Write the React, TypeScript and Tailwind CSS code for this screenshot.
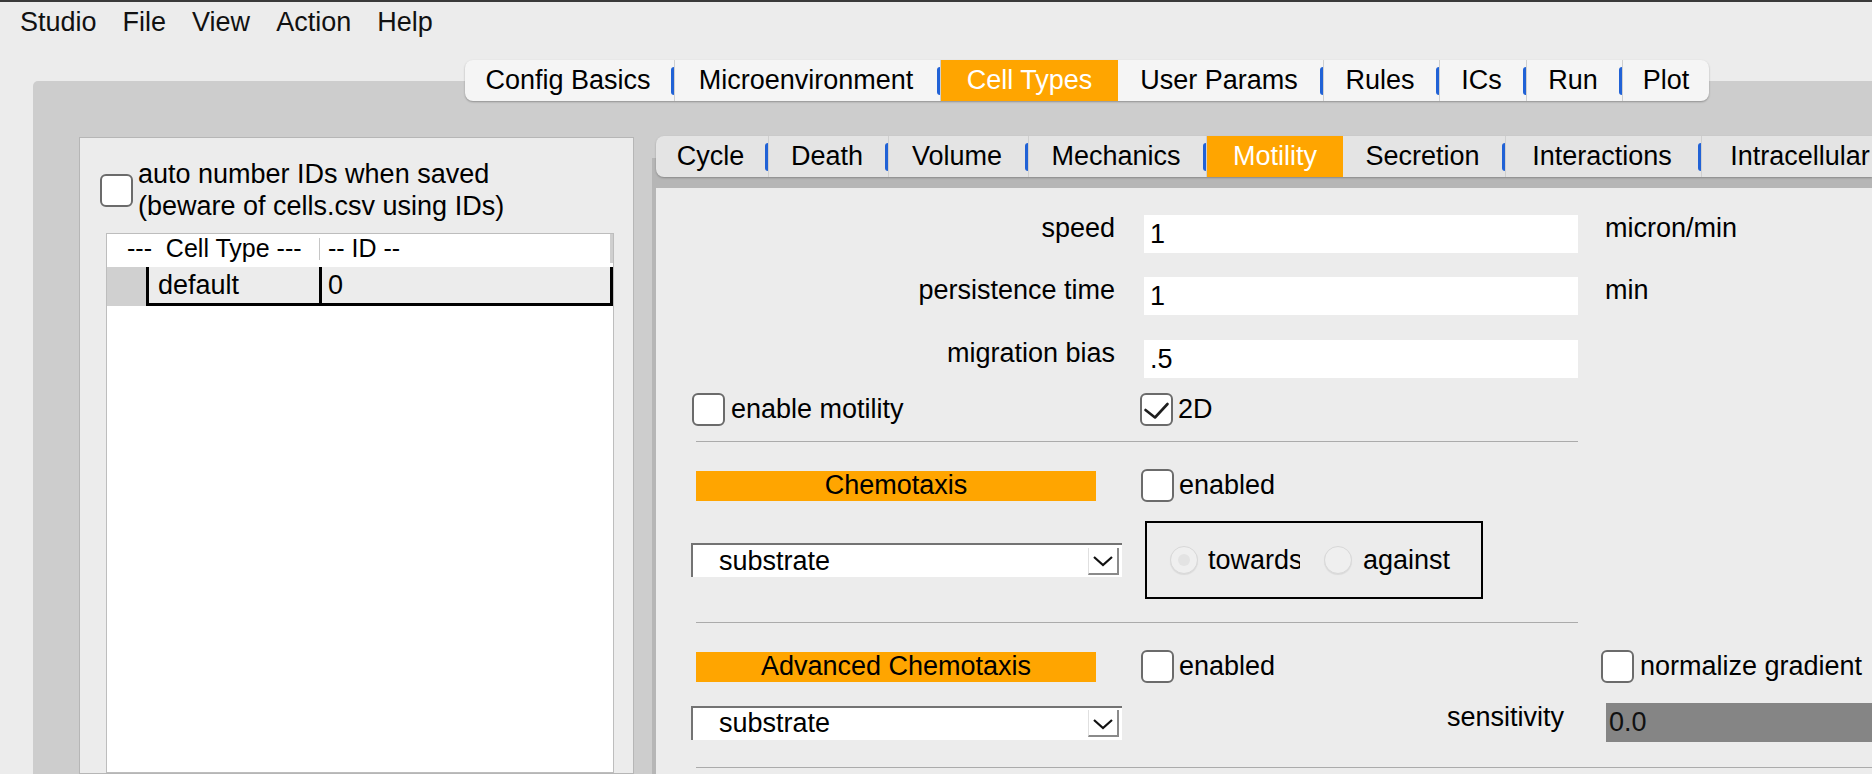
import React from "react";

const SANS = "font-['Liberation_Sans',Arial,sans-serif]";

type Tab = { label: string; width: string };

const mainTabs: Tab[] = [
  { label: "Config Basics", width: "w-[206px]" },
  { label: "Microenvironment", width: "w-[266px]" },
  { label: "Cell Types", width: "w-[181px]" },
  { label: "User Params", width: "w-[202px]" },
  { label: "Rules", width: "w-[116px]" },
  { label: "ICs", width: "w-[87px]" },
  { label: "Run", width: "w-[96px]" },
  { label: "Plot", width: "w-[90px]" },
];

const cellTabs: Tab[] = [
  { label: "Cycle", width: "w-[109px]" },
  { label: "Death", width: "w-[120px]" },
  { label: "Volume", width: "w-[140px]" },
  { label: "Mechanics", width: "w-[178px]" },
  { label: "Motility", width: "w-[140px]" },
  { label: "Secretion", width: "w-[159px]" },
  { label: "Interactions", width: "w-[196px]" },
  { label: "Intracellular", width: "w-[200px]" },
];

function Separator() {
  return (
    <span className="flex h-full w-[4px] shrink-0 items-center">
      <span className="h-[28px] w-[3px] rounded-l-full bg-[#2162d6]" />
      <span className="h-full w-px bg-[#cfcfcf]" />
    </span>
  );
}

function TabStrip({ tabs, active, className }: { tabs: Tab[]; active: string; className: string }) {
  return (
    <div className={`flex h-[41px] overflow-hidden text-[27px] ${className}`}>
      {tabs.map((t, i) => {
        const isActive = t.label === active;
        const showSep = i > 0 && tabs[i - 1].label !== active;
        return (
          <div key={t.label} className={`flex h-full shrink-0 ${t.width}`}>
            {showSep && <Separator />}
            <div
              className={`flex flex-1 items-center justify-center whitespace-nowrap ${
                isActive ? "bg-[#ffa500] text-white" : ""
              }`}
            >
              {t.label}
            </div>
          </div>
        );
      })}
    </div>
  );
}

function Checkbox({ checked }: { checked?: boolean }) {
  return (
    <span className="flex h-[33px] w-[33px] shrink-0 items-center justify-center rounded-[6px] border-2 border-[#6b6b6b] bg-white">
      {checked && (
        <svg viewBox="0 0 29 29" className="h-[29px] w-[29px]">
          <path
            d="M3.5 15 L13 22.5 L25.5 9"
            fill="none"
            stroke="#1e1e1e"
            strokeWidth="2.6"
            strokeLinecap="round"
            strokeLinejoin="round"
          />
        </svg>
      )}
    </span>
  );
}

function Radio({ dot }: { dot?: boolean }) {
  return (
    <span className="flex h-[28px] w-[28px] shrink-0 items-center justify-center rounded-full border border-[#d8d8d8] bg-[#efefef] shadow-[0_1px_1px_rgba(0,0,0,0.08)]">
      {dot && <span className="h-[12px] w-[12px] rounded-full bg-[#e3e3e3]" />}
    </span>
  );
}

function Combo() {
  return (
    <div className="flex h-[34px] w-[431px] shrink-0 items-center border-l-2 border-t-2 border-[#737373] bg-white">
      <span className="pl-[26px] text-[27px]">substrate</span>
      <span className="ml-auto mr-[3px] flex h-[27px] w-[31px] items-center justify-center border-b-2 border-l border-r-2 border-[#8a8a8a] border-l-[#e0e0e0]">
        <svg viewBox="0 0 28 24" className="h-[24px] w-[28px]">
          <path d="M5 9 L14 17 L23 9" fill="none" stroke="#111" strokeWidth="2.2" />
        </svg>
      </span>
    </div>
  );
}

function FieldRow({ label, value, unit, className }: { label: string; value: string; unit?: string; className: string }) {
  return (
    <div className={`flex h-[38px] items-start text-[27px] ${className}`}>
      <div className="w-[424px] shrink-0 text-right leading-[26px]">{label}</div>
      <div className="ml-[29px] flex h-[38px] w-[434px] shrink-0 items-center bg-white pl-[6px]">{value}</div>
      {unit && <div className="ml-[27px] leading-[26px]">{unit}</div>}
    </div>
  );
}

function OrangeBar({ title }: { title: string }) {
  return (
    <div className="ml-[5px] flex h-[30px] w-[400px] shrink-0 items-center justify-center bg-[#ffa500] text-[27px]">
      {title}
    </div>
  );
}

export default function App() {
  return (
    <div className={`h-[774px] w-[1872px] overflow-hidden bg-[#ececec] text-black ${SANS}`}>
      {/* menu bar */}
      <div className="h-[2px] bg-[#3a3a3a]" />
      <div className="flex h-[40px] items-center gap-[26px] pl-[20px] text-[27px] text-[#111]">
        <span>Studio</span>
        <span>File</span>
        <span>View</span>
        <span>Action</span>
        <span>Help</span>
      </div>

      {/* main tabs */}
      <TabStrip
        tabs={mainTabs}
        active="Cell Types"
        className="relative z-10 ml-[465px] mt-[18px] w-fit rounded-[8px] bg-[#f5f5f5] shadow-[0_1px_2px_rgba(0,0,0,0.3)]"
      />

      {/* outer panel */}
      <div className="-mt-[20px] ml-[33px] flex h-[693px] rounded-tl-[5px] bg-[#cdcdcd] pl-[46px] pt-[56px]">
        {/* left panel: cell type list */}
        <div className="flex w-[555px] shrink-0 flex-col border border-[#b6b6b6] bg-[#ececec]">
          <div className="flex items-center pl-[20px] pt-[20px]">
            <Checkbox />
            <div className="ml-[5px] text-[27px] leading-[32px]">
              <div>auto number IDs when saved</div>
              <div>(beware of cells.csv using IDs)</div>
            </div>
          </div>
          <div className="ml-[26px] mt-[11px] flex w-[508px] flex-1 flex-col border border-[#bdbdbd] bg-white">
            <div className="flex h-[29px] items-center text-[25px]">
              <div className="w-[212px] whitespace-pre pl-[20px]">{"---  Cell Type ---"}</div>
              <div className="h-[22px] w-px bg-[#c6c6c6]" />
              <div className="pl-[8px]">-- ID --</div>
              <div className="ml-auto h-full w-[3px] bg-[#cfcfcf]" />
            </div>
            <div className="mt-[4px] flex h-[39px] bg-[#ececec] text-[27px]">
              <div className="w-[39px] bg-[#d0d0d0]" />
              <div className="flex w-[173px] items-center border-b-[3px] border-l-[3px] border-black pl-[9px]">default</div>
              <div className="flex flex-1 items-center border-b-[3px] border-l-[3px] border-r-[3px] border-black pl-[6px]">0</div>
            </div>
          </div>
        </div>

        {/* right: cell type tabs */}
        <div className="-mt-[1px] ml-[18px] flex min-w-0 flex-1 flex-col">
          <TabStrip
            tabs={cellTabs}
            active="Motility"
            className="relative z-10 ml-[4px] rounded-l-[8px] bg-[#e4e4e4] shadow-[0_1px_2px_rgba(0,0,0,0.25)]"
          />
          <div className="-mt-[19px] flex flex-1 flex-col bg-[#b6b6b6] pl-[4px] pt-[30px]">
            <div className="flex-1 bg-[#ececec] pl-[35px] pt-[27px] text-[27px]">
              <FieldRow label="speed" value="1" unit="micron/min" className="" />
              <FieldRow label="persistence time" value="1" unit="min" className="mt-[24px]" />
              <FieldRow label="migration bias" value=".5" className="mt-[25px]" />

              <div className="mt-[15px] flex h-[33px] items-center">
                <div className="flex w-[449px] shrink-0 items-center pl-[1px]">
                  <Checkbox />
                  <span className="ml-[6px]">enable motility</span>
                </div>
                <Checkbox checked />
                <span className="ml-[5px]">2D</span>
              </div>

              <div className="ml-[5px] mt-[15px] h-px w-[882px] bg-[#ababab]" />

              <div className="mt-[27px] flex h-[33px] items-center">
                <div className="w-[449px] shrink-0">
                  <OrangeBar title="Chemotaxis" />
                </div>
                <span className="pl-[1px]">
                  <Checkbox />
                </span>
                <span className="ml-[5px]">enabled</span>
              </div>

              <div className="mt-[19px] flex h-[78px] items-center">
                <Combo />
                <div className="ml-[23px] flex h-[78px] w-[338px] shrink-0 items-center border-2 border-black pl-[23px]">
                  <Radio dot />
                  <span className="ml-[10px] w-[92px] overflow-hidden whitespace-nowrap">towards</span>
                  <span className="ml-[24px]">
                    <Radio />
                  </span>
                  <span className="ml-[11px]">against</span>
                </div>
              </div>

              <div className="ml-[5px] mt-[23px] h-px w-[882px] bg-[#ababab]" />

              <div className="mt-[27px] flex h-[33px] items-center">
                <div className="w-[449px] shrink-0">
                  <OrangeBar title="Advanced Chemotaxis" />
                </div>
                <div className="flex w-[461px] shrink-0 items-center pl-[1px]">
                  <Checkbox />
                  <span className="ml-[5px]">enabled</span>
                </div>
                <Checkbox />
                <span className="ml-[6px] whitespace-nowrap">normalize gradient</span>
              </div>

              <div className="mt-[20px] flex h-[39px] items-center">
                <Combo />
                <div className="mb-[12px] w-[442px] shrink-0 text-right leading-[26px]">sensitivity</div>
                <div className="ml-[42px] flex h-[39px] w-[320px] shrink-0 items-center bg-[#858585] pl-[3px] text-[#111]">
                  0.0
                </div>
              </div>

              <div className="ml-[5px] mt-[25px] h-px w-[1300px] bg-[#ababab]" />
            </div>
          </div>
        </div>
      </div>
    </div>
  );
}
